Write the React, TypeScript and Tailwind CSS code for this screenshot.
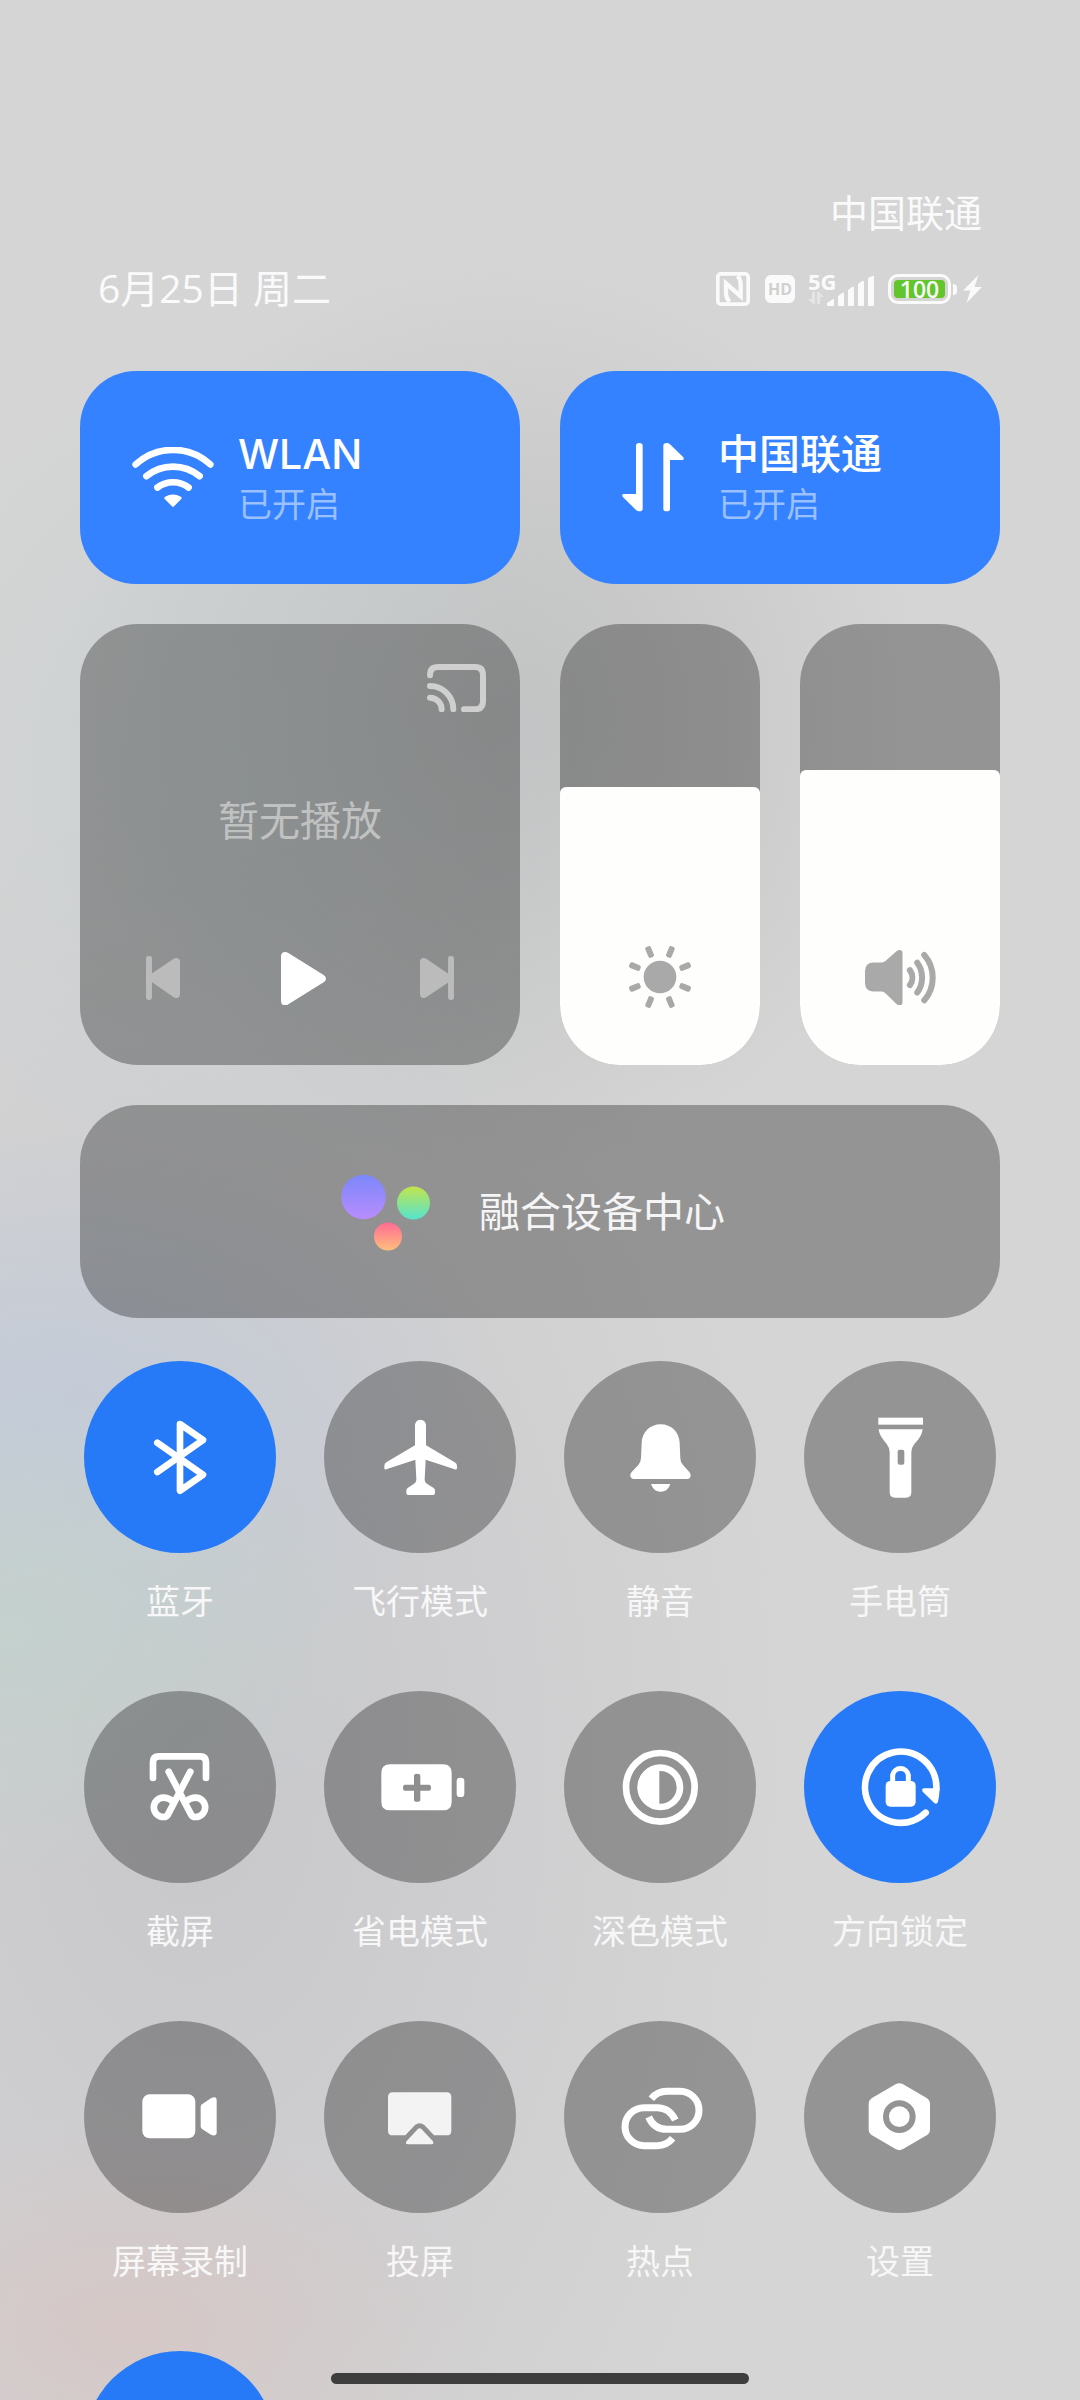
import { useState } from "react";
import clsx from "clsx";

type Tile = {
  id: string;
  label?: string;
  icon?: React.ReactNode;
};

const TILES: Tile[] = [
  { id: "bluetooth", label: "蓝牙", icon: <BluetoothIcon /> },
  { id: "airplane", label: "飞行模式", icon: <PlaneIcon /> },
  { id: "mute", label: "静音", icon: <BellIcon /> },
  { id: "torch", label: "手电筒", icon: <TorchIcon /> },
  { id: "screenshot", label: "截屏", icon: <ScissorsIcon /> },
  { id: "saver", label: "省电模式", icon: <SaverIcon /> },
  { id: "dark", label: "深色模式", icon: <DarkModeIcon /> },
  { id: "rotation", label: "方向锁定", icon: <RotationLockIcon /> },
  { id: "record", label: "屏幕录制", icon: <RecordIcon /> },
  { id: "mirror", label: "投屏", icon: <MirrorIcon /> },
  { id: "hotspot", label: "热点", icon: <LinkIcon /> },
  { id: "settings", label: "设置", icon: <SettingsIcon /> },
  // Peeks in from below the fold.
  { id: "more" },
];

export default function App() {
  const [on, setOn] = useState<string[]>(["bluetooth", "rotation", "more"]);

  function toggle(id: string) {
    setOn((prev) => (prev.includes(id) ? prev.filter((x) => x !== id) : [...prev, id]));
  }

  return (
    <div className="relative h-screen overflow-hidden bg-[#d5d5d5] bg-[radial-gradient(34%_9%_at_12%_97%,rgba(214,199,197,0.9),rgba(214,199,197,0)),radial-gradient(36%_10%_at_0%_68%,rgba(194,210,204,0.8),rgba(194,210,204,0)),radial-gradient(42%_12%_at_4%_59%,rgba(194,203,217,0.9),rgba(194,203,217,0)),radial-gradient(38%_18%_at_24%_32%,rgba(196,206,208,0.6),rgba(196,206,208,0)),radial-gradient(40%_19%_at_46%_30%,rgba(190,190,190,0.9),rgba(190,190,190,0)),radial-gradient(56%_42%_at_18%_74%,rgba(199,199,203,0.95),rgba(199,199,203,0))] px-20 font-['Open_Sans','Noto_Sans_CJK_SC',sans-serif] text-white">
      <header className="px-[18px] pt-[184px] text-[#fafafa]">
        <p className="text-right text-[38px] leading-[56px]">中国联通</p>
        <div className="mt-5 flex items-center justify-between">
          <p className="text-[39px] leading-[56px]">6月25日 周二</p>
          <StatusIcons />
        </div>
      </header>

      <main className="mt-[55px]">
        <div className="grid grid-cols-2 gap-10">
          <NetworkTile title="WLAN" icon={<WifiIcon />} />
          <NetworkTile title="中国联通" icon={<DataIcon />} />

          <section className="flex h-[441px] flex-col rounded-[58px] bg-black/30">
            <button type="button" aria-label="投放" className="mt-10 mr-[34px] self-end">
              <CastIcon />
            </button>
            <p className="mt-20 text-center text-[41px] leading-[56px] text-[#c0c1c1]">暂无播放</p>
            <div className="mt-auto flex items-center justify-between px-[66px] pb-[60px]">
              <button type="button" aria-label="上一首" className="text-[#bbbbbb]">
                <SkipIcon className="rotate-180" />
              </button>
              <button type="button" aria-label="播放" className="pl-1.5">
                <PlayIcon />
              </button>
              <button type="button" aria-label="下一首" className="text-[#bbbbbb]">
                <SkipIcon />
              </button>
            </div>
          </section>

          <div className="grid grid-cols-2 gap-10">
            <VerticalSlider label="亮度" initial={63} icon={<SunIcon />} />
            <VerticalSlider label="音量" initial={67} icon={<SpeakerIcon />} />
          </div>

          <button
            type="button"
            className="col-span-2 flex h-[213px] items-center justify-center gap-12 rounded-[58px] bg-black/30 pr-3.5 text-[41px] text-[#f5f5f5]"
          >
            <DeviceCenterLogo />
            融合设备中心
          </button>
        </div>

        <div className="mt-[43px] grid grid-cols-4 gap-x-10 gap-y-[66px]">
          {TILES.map((tile) => (
            <div key={tile.id} className="flex flex-col items-center gap-6">
              <button
                type="button"
                aria-label={tile.label ?? "更多"}
                aria-pressed={on.includes(tile.id)}
                onClick={() => toggle(tile.id)}
                className={clsx(
                  "flex size-48 items-center justify-center rounded-full",
                  on.includes(tile.id) ? "bg-[#277af7]" : "bg-black/30"
                )}
              >
                {tile.icon}
              </button>
              <span className="h-12 text-[34px] leading-[48px] text-[#f7f7f7]">{tile.label}</span>
            </div>
          ))}
        </div>
      </main>

      <div className="absolute bottom-4 left-1/2 h-[11px] w-[418px] -translate-x-1/2 rounded-full bg-[#3e3e3e]" />
    </div>
  );
}

function NetworkTile({ title, icon }: { title: string; icon: React.ReactNode }) {
  return (
    <button
      type="button"
      aria-pressed
      className="flex h-[213px] items-center gap-6 rounded-[56px] bg-[#3482ff] pl-[52px] text-left"
    >
      <span className="flex w-[82px] justify-center">{icon}</span>
      <span className="flex flex-col">
        <span className="font-['Inter','Noto_Sans_CJK_SC',sans-serif] text-[41px] leading-[52px] font-medium">
          {title}
        </span>
        <span className="text-[34px] leading-[48px] text-[#9ac0ff]">已开启</span>
      </span>
    </button>
  );
}

function VerticalSlider({
  label,
  initial,
  icon,
}: {
  label: string;
  initial: number;
  icon: React.ReactNode;
}) {
  const [value, setValue] = useState(initial);

  return (
    <label className="relative flex flex-col justify-end overflow-hidden rounded-[60px] bg-black/30">
      <span
        className="flex items-end justify-center rounded-t-md bg-[#fefefd] pb-14 text-[#a9a9a9]"
        style={{ height: `${value}%` }}
      >
        {icon}
      </span>
      <input
        type="range"
        aria-label={label}
        value={value}
        onChange={(e) => setValue(Number(e.target.value))}
        className="absolute inset-0 h-full w-full opacity-0 [direction:rtl] [writing-mode:vertical-lr]"
      />
    </label>
  );
}

function StatusIcons() {
  return (
    <div className="flex items-center pt-0.5">
      <svg viewBox="0 0 102 102" className="size-[34px]" fill="none" stroke="currentColor" strokeWidth="11" aria-hidden>
        <rect x="5.5" y="5.5" width="91" height="91" rx="9" />
        <path d="M41 89Q30 80 30 60V34L74 73V38Q74 22 65 12" strokeWidth="13" />
      </svg>
      <span className="ml-[15px] flex h-7 w-[30px] items-center justify-center rounded-md bg-[#fafafa] text-[16px] leading-none font-bold text-[#d0d0d0]">
        HD
      </span>
      <span className="ml-[13px] flex h-[34px] w-[66px] items-end">
        <span className="flex h-full w-[19px] flex-col justify-between pb-0.5">
          <span className="text-[22px] leading-[18px] font-bold">5G</span>
          <svg viewBox="0 0 16 12" className="h-3 w-4 opacity-45" fill="currentColor" aria-hidden>
            <path d="M4 0h3v12H5L0 7h4zM9 12V0h2l5 5h-4v7z" />
          </svg>
        </span>
        <svg viewBox="0 0 47 31" className="h-[31px] w-[47px]" fill="currentColor" aria-hidden>
          <path d="M0 28l6-4q1 0 1 1v5q0 1-1 1h-5q-1 0-1-1zM11 21l4-3q2-1 2 1v11q0 1-1 1h-4q-1 0-1-1zM21 15l4-3q2-1 2 1v17q0 1-1 1h-4q-1 0-1-1zM31 9l4-3q2-1 2 1v23q0 1-1 1h-4q-1 0-1-1zM41 3l4-2q2-1 2 1v28q0 1-1 1h-4q-1 0-1-1z" />
        </svg>
      </span>
      <span className="ml-3.5 flex h-[30px] w-[63px] items-center rounded-[10px] border-[3px] border-[#fafafa] p-[3px]">
        <span className="flex h-full w-full items-center justify-center rounded-[4px] bg-[#62c52c] text-[23px] leading-none font-semibold">
          100
        </span>
      </span>
      <span className="ml-0.5 h-[11px] w-1 rounded-r-md bg-[#fafafa]" />
      <svg viewBox="0 0 19 28" className="ml-1.5 h-7 w-[19px]" fill="currentColor" aria-hidden>
        <path d="M15.5 0 0 15.5h7.5L3.5 28 19 12h-7.5z" />
      </svg>
    </div>
  );
}

function WifiIcon() {
  return (
    <svg viewBox="0 0 245 180" className="w-[82px]" fill="none" stroke="currentColor" strokeWidth="20" strokeLinecap="round" aria-hidden>
      <path d="M11 52A165 165 0 0 1 234 52" />
      <path d="M43 87A125 125 0 0 1 202 87" />
      <path d="M76 121A77 77 0 0 1 169 121" />
      <path d="M97 155Q95 152 99 149Q122 135 146 149Q150 152 148 155L125 178Q122 180 120 178Z" fill="currentColor" stroke="none" />
    </svg>
  );
}

function DataIcon() {
  return (
    <svg viewBox="0 0 186 205" className="w-[62px]" fill="currentColor" aria-hidden>
      <path d="M42 8Q42 0 52 0Q62 0 62 8V197Q62 205 52 205Q46 205 42 201L2 161Q-2 153 6 153H42Z" />
      <path d="M144 197Q144 205 134 205Q124 205 124 197V8Q124 0 134 0Q140 0 144 4L184 43Q188 51 180 51H144Z" />
    </svg>
  );
}

function CastIcon() {
  return (
    <svg viewBox="0 0 177 145" className="w-[59px] text-[#cfcfcf]" fill="none" stroke="currentColor" strokeWidth="18" strokeLinecap="round" aria-hidden>
      <path d="M9 34V33Q9 9 33 9H144Q168 9 168 33V112Q168 136 144 136H111" />
      <path d="M9 66A70 70 0 0 1 79 136" />
      <path d="M9 101A35 35 0 0 1 44 136" />
    </svg>
  );
}

function PlayIcon() {
  return (
    <svg viewBox="0 0 135 160" className="w-[45px]" fill="currentColor" aria-hidden>
      <path d="M0 14Q0 0 12 0Q17 0 22 3L128 69Q135 74 135 80Q135 86 128 91L22 157Q17 160 12 160Q0 160 0 146Z" />
    </svg>
  );
}

function SkipIcon({ className }: { className?: string }) {
  return (
    <svg viewBox="0 0 103 133" className={clsx("w-[34px]", className)} fill="currentColor" aria-hidden>
      <rect x="85" width="18" height="133" rx="7" />
      <path d="M0 18Q0 6 11 6Q15 6 19 8L90 57V77L19 125Q15 127 11 127Q0 127 0 115Z" />
    </svg>
  );
}

function SunIcon() {
  const angles = [22.5, 67.5, 112.5, 157.5, 202.5, 247.5, 292.5, 337.5];
  return (
    <svg viewBox="-96 -96 192 192" className="w-16" fill="currentColor" aria-hidden>
      <circle r="49" />
      {angles.map((a) => (
        <rect key={a} x="64" y="-9" width="35" height="18" rx="6" transform={`rotate(${a})`} />
      ))}
    </svg>
  );
}

function SpeakerIcon() {
  return (
    <svg viewBox="0 0 212 165" className="mb-1 w-[71px]" fill="currentColor" aria-hidden>
      <path d="M0 63Q0 37 26 37H50Q56 37 61 33L94 4Q99 0 104 0Q112 0 112 9V156Q112 165 104 165Q99 165 94 161L61 129Q56 124 50 124H26Q0 124 0 98Z" />
      <g fill="none" stroke="currentColor" strokeWidth="18" strokeLinecap="round">
        <path d="M134 60A38 38 0 0 1 134 105" />
        <path d="M156 38A76 76 0 0 1 156 127" />
        <path d="M177 15A103 103 0 0 1 177 150" />
      </g>
    </svg>
  );
}

function DeviceCenterLogo() {
  return (
    <svg viewBox="0 0 90 80" className="w-[90px]" aria-hidden>
      <defs>
        <linearGradient id="dc-violet" x1="0" y1="0" x2="0" y2="1">
          <stop stopColor="#7b88fb" />
          <stop offset="1" stopColor="#b98cfd" />
        </linearGradient>
        <linearGradient id="dc-green" x1="0" y1="0" x2="0" y2="1">
          <stop stopColor="#c3e44c" />
          <stop offset="1" stopColor="#55e3cf" />
        </linearGradient>
        <linearGradient id="dc-coral" x1="0" y1="0" x2="0" y2="1">
          <stop stopColor="#ff6a93" />
          <stop offset="1" stopColor="#ffc07c" />
        </linearGradient>
      </defs>
      <circle cx="22.5" cy="25" r="22.3" fill="url(#dc-violet)" />
      <circle cx="72.5" cy="31" r="16.5" fill="url(#dc-green)" />
      <circle cx="47" cy="64.5" r="14" fill="url(#dc-coral)" />
    </svg>
  );
}

/** Shared 288-unit artboard for the round toggles. */
function Glyph({ children }: { children: React.ReactNode }) {
  return (
    <svg viewBox="0 0 288 288" className="size-24" fill="currentColor" aria-hidden>
      {children}
    </svg>
  );
}

function BluetoothIcon() {
  return (
    <Glyph>
      <path
        d="M76 101L213 197L144 245V45L213 93L76 189"
        fill="none"
        stroke="currentColor"
        strokeWidth="20"
        strokeLinecap="round"
        strokeLinejoin="round"
      />
    </Glyph>
  );
}

function PlaneIcon() {
  return (
    <Glyph>
      <path d="M145 32Q162 32 162 52V109L248 160Q255 164 255 171V177Q255 183 248 181L161 152L158 210Q158 221 167 226L184 236Q189 239 189 245V252Q189 258 183 258H109Q103 258 103 252V245Q103 239 108 236L124 226Q133 221 133 210L130 152L43 181Q37 183 37 177V171Q37 164 43 160L129 109V52Q129 32 145 32Z" />
    </Glyph>
  );
}

function BellIcon() {
  return (
    <Glyph>
      <path d="M146 46C178 46 202 70 203 102L205 148Q205 160 213 168L232 189Q237 195 236 201Q234 210 226 210H66Q57 210 55 201Q54 195 59 189L79 168Q86 160 87 148L89 102C90 70 114 46 146 46Z" />
      <path d="M117 225H175Q168 248 146 248Q124 248 117 225Z" />
    </Glyph>
  );
}

function TorchIcon() {
  return (
    <Glyph>
      <rect x="79" y="26" width="134" height="21" />
      <path
        fillRule="evenodd"
        d="M80 61H212Q210 78 198 92L187 105Q178 116 178 130V250Q178 266 162 266H129Q113 266 113 250V130Q113 116 104 105L94 92Q82 78 80 61ZM143 122Q137 122 137 128V161Q137 167 143 167H151Q157 167 157 161V128Q157 122 151 122Z"
      />
    </Glyph>
  );
}

function ScissorsIcon() {
  return (
    <Glyph>
      <g fill="none" stroke="currentColor" strokeWidth="20" strokeLinecap="round" strokeLinejoin="round">
        <path d="M63 117V70Q63 52 81 52H204Q222 52 222 70V117" />
        <path d="M175 98L108 226Q104 234 95 234A29 29 0 0 1 94 176Q110 176 124 188" />
        <path d="M110 98L177 226Q181 234 190 234A29 29 0 0 0 191 176Q175 176 161 188" />
      </g>
    </Glyph>
  );
}

function SaverIcon() {
  return (
    <Glyph>
      <path
        fillRule="evenodd"
        d="M54 76H213Q239 76 239 102V188Q239 214 213 214H54Q28 214 28 188V102Q28 76 54 76ZM126 110V137H99Q93 137 93 146Q93 155 99 155H126V182Q126 188 135 188Q145 188 145 182V155H171Q177 155 177 146Q177 137 171 137H145V110Q145 104 135 104Q126 104 126 110Z"
      />
      <rect x="254" y="116" width="23" height="58" rx="10" />
    </Glyph>
  );
}

function DarkModeIcon() {
  return (
    <Glyph>
      <g fill="none" stroke="currentColor" strokeWidth="20">
        <circle cx="145" cy="145" r="103" />
        <circle cx="145" cy="145" r="59" />
      </g>
      <path d="M142 80A65 65 0 0 0 142 210Z" />
    </Glyph>
  );
}

function RotationLockIcon() {
  return (
    <Glyph>
      <g fill="none" stroke="currentColor" strokeLinecap="round">
        <path d="M221 221A107 107 0 1 1 253 150" strokeWidth="20" />
        <path d="M122 132V108A24 24 0 0 1 169 108V132" strokeWidth="15" />
      </g>
      <rect x="101" y="126" width="90" height="77" rx="14" />
      <path d="M216 148H263Q262 172 258 188Q254 198 246 191L212 158Q208 149 216 148Z" />
    </Glyph>
  );
}

function RecordIcon() {
  return (
    <Glyph>
      <rect x="31" y="76" width="159" height="132" rx="22" />
      <path d="M206 114Q206 109 210 106L238 87Q254 80 254 94V190Q254 203 238 198L210 180Q206 177 206 172Z" />
    </Glyph>
  );
}

function MirrorIcon() {
  return (
    <Glyph>
      <g fill="#f3f3f3">
        <path d="M62 70H224Q238 70 238 84V185Q238 199 224 199H186L157 168Q143 157 129 168L100 199H62Q48 199 48 185V84Q48 70 62 70Z" />
        <path d="M137 181Q143 175 149 181L182 216Q188 226 178 226H108Q98 226 104 216Z" />
      </g>
    </Glyph>
  );
}

function LinkIcon() {
  return (
    <Glyph>
      <g fill="none" stroke="currentColor" strokeWidth="21">
        <path d="M118 89Q136 67 164 67H204A57 57 0 0 1 204 181H164Q126 181 110 144" />
        <path d="M182 208Q164 230 136 230H96A57 57 0 0 1 96 116H136Q172 116 190 153" />
      </g>
    </Glyph>
  );
}

function SettingsIcon() {
  return (
    <Glyph>
      <path
        fillRule="evenodd"
        d="M132 45Q142 40 152 45L224 87Q234 93 234 105V181Q234 193 224 199L152 241Q142 246 132 241L60 199Q50 193 50 181V105Q50 93 60 87ZM142 94a49 49 0 1 0 0 98a49 49 0 1 0 0-98Z"
      />
      <circle cx="142" cy="143" r="31" />
    </Glyph>
  );
}
